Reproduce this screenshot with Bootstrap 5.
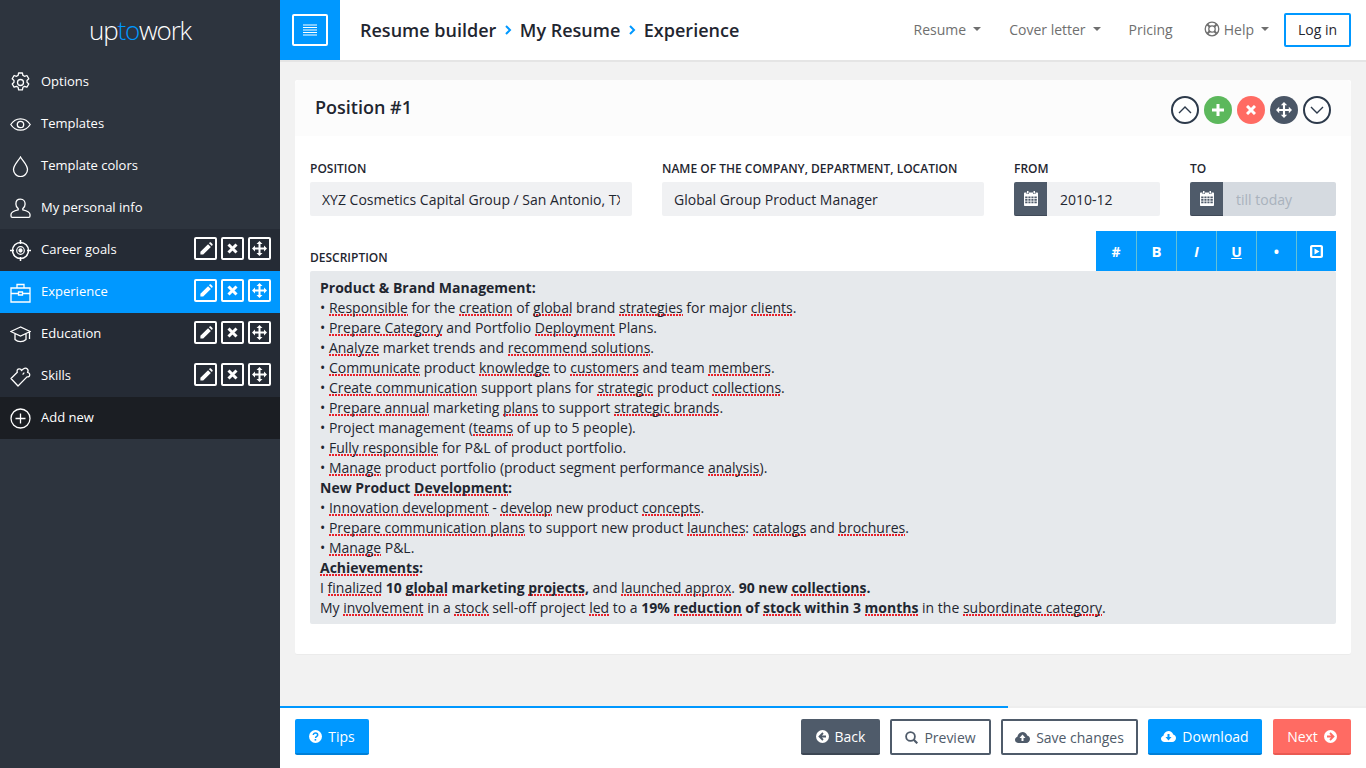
<!DOCTYPE html>
<html lang="en">
<head>
    <meta charset="UTF-8">
    <meta name="viewport" content="width=device-width, initial-scale=1.0">
    <title>Resume builder</title>
    <link href="https://cdn.jsdelivr.net/npm/bootstrap@5.3.0/dist/css/bootstrap.min.css" rel="stylesheet">
    <style>
        html, body { height: 100%; overflow: hidden; }
        body { font-family: "Open Sans", sans-serif; font-size: 14px; background: #f2f2f2; color: #1f2630; }
        svg { display: block; flex: none; }
        .app-side { width: 280px; flex: none; background: #2d343e; }
        .app-logo { height: 61px; font-size: 26px; font-weight: 300; letter-spacing: -1.200px; color: #fff; padding-top: 9px; line-height: 43px; }
        .app-logo span { color: #0098ff; }
        .side-row { height: 42px; padding: 0 9px 0 10px; color: #fff; font-size: 13px; font-weight: 500; gap: 10px; }
        .side-row.is-dark { background: #252b35; }
        .side-row.is-active { background: #0098ff; }
        .side-row.is-add { background: #1b1e23; }
        .side-tools { margin-top: -3px; }
        .side-act { width: 23px; height: 23px; border: 2px solid #fff; border-radius: 2px; background: transparent; padding: 0; color: #fff; }
        .app-top { height: 62px; background: #fff; border-bottom: 2px solid #e5e5e5; flex: none; padding-right: 15px; }
        .menu-tile { width: 60px; height: 60px; background: #0098ff; }
        .menu-box { width: 36px; height: 32px; border: 2px solid #fff; border-radius: 2px; background: transparent; padding: 0; }
        .crumbs { margin: 0 0 0 20px; font-size: 18px; font-weight: 600; height: 60px; }
        .crumbs li { color: #1f2630; }
        .crumbs svg { margin: 0 8px 0 8.500px; }
        .top-nav { height: 58px; }
        .top-link { color: #6f6f6f; padding: 0; }
        .top-link:hover { color: #6f6f6f; }
        .tri { width: 0; height: 0; border: 4px solid transparent; border-top-color: #6f6f6f; border-bottom: 0; margin-left: 7px; }
        .login-btn { height: 34px; width: 67px; padding: 0; border: 2px solid #0098ff; border-radius: 2px; color: #1f2630; font-size: 14px; line-height: 30px; margin: 2px 0 0 15px; }
        .app-scroll { padding: 18px 15px 0; min-height: 0; }
        .pos-card { height: 574px; border: 0; border-radius: 2px; background: #fff; box-shadow: 0 1px 1px rgba(0,0,0,.03); }
        .pos-head { height: 56px; background: #fcfcfc; border: 0; padding: 0 20px; }
        .pos-head h5 { font-size: 18px; font-weight: 600; margin: 0; }
        .circ-row { gap: 5px; margin-top: 3px; }
        .circ { width: 28px; height: 28px; border-radius: 50%; border: 0; padding: 0; }
        .circ-line { border: 2px solid #2d3a4b; background: #fff; }
        .circ-green { background: #5cb85c; }
        .circ-red { background: #ff6b63; }
        .circ-slate { background: #4a5666; }
        .pos-body { padding: 24px 15px 0; }
        .field-grid { display: grid; grid-template-columns: 322px 322px 146px 146px; gap: 30px; }
        .fld-label { font-size: 12px; font-weight: 600; text-transform: uppercase; color: #1f2630; line-height: 18px; margin-bottom: 4px; display: block; }
        .fld-input.form-control { height: 34px; background: #f0f1f3; border: 0; border-radius: 2px; font-size: 14px; padding: 0 12px; color: #1f2630; }
        .input-group .fld-input.form-control { padding-left: 13px; }
        .fld-addon { width: 34px; padding: 0; justify-content: center; background: #4f5b6a; border: 0; border-bottom: 1px solid #3f4957; border-radius: 2px 0 0 2px; }
        .input-group .fld-input.form-control[disabled] { background: #d5dae0; color: #a9b2bd; }
        .fld-input::placeholder { color: #a9b2bd; opacity: 1; }
        .desc-head { margin-top: 15px; height: 40px; }
        .desc-head .fld-label { margin: 0; padding: 8px 0 0; line-height: 18px; align-self: center; position: relative; top: 3px; }
        .fmt-group { display: flex; align-self: flex-start; }
        .fmt-btn { width: 40px; height: 40px; background: #0098ff; border: 0; border-left: 1px solid #62c0d8; border-radius: 0; color: #fff; font-weight: 700; font-size: 14px; padding: 0; }
        .fmt-btn:first-child { border-left: 0; }
        .fmt-btn:hover { background: #0098ff; color: #fff; }
        .desc-box { height: 353px; background: #e6e9ec; border-radius: 2px; padding: 7px 10px; line-height: 20px; color: #1f2630; }
        .desc-box b { font-weight: 700; }
        .sp { background: repeating-linear-gradient(90deg, #e8212b 0 2px, transparent 2px 3px) left bottom 1px / 100% 2px no-repeat; }
        .app-foot { height: 60px; background: #fff; flex: none; padding: 11px 15px 0; }
        .foot-line { height: 2px; background: #eee; flex: none; }
        .foot-line .progress-bar { background: #0098ff; }
        .act-btn { height: 36px; border-radius: 2px; font-size: 14px; padding: 0; gap: 6px; border: 0; justify-content: center; color: #fff; }
        .act-blue { background: #0098ff; border-bottom: 2px solid #0080d8; }
        .act-slate { background: #4f5b6a; border-bottom: 2px solid #3c4653; }
        .act-red { background: #ff6b63; border-bottom: 2px solid #ea5a52; }
        .act-line { border: 2px solid #4f5b6a; background: #fff; color: #4f5b6a; }
        .act-btn:hover { color: inherit; }
        .w-tips { width: 74px; }
        .w-back { width: 79px; }
        .w-prev { width: 101px; }
        .w-save { width: 137px; }
        .w-down { width: 114px; }
        .w-next { width: 78px; margin-left: 1px; }
    </style>
</head>
<body>
<div class="d-flex h-100">
    <aside class="app-side">
        <div class="app-logo text-center">up<span>to</span>work</div>
        <div class="side-row d-flex align-items-center">
            <svg width="21" height="21" viewBox="0 0 21 21" fill="none" stroke="#fff" stroke-width="1.300"><path d="M8.600 1h3.800l.5 2.400 1.600.9 2.400-.8 1.900 3.300-1.800 1.600v1.900l1.800 1.600-1.900 3.300-2.400-.8-1.600.9-.5 2.500H8.600l-.5-2.500-1.600-.9-2.400.8-1.900-3.300 1.800-1.600V8.400L2.200 6.800l1.900-3.300 2.400.8 1.600-.9z" stroke-linejoin="round"/><circle cx="10.500" cy="10.500" r="3"/></svg>
            <span>Options</span>
        </div>
        <div class="side-row d-flex align-items-center">
            <svg width="21" height="21" viewBox="0 0 21 21" fill="none" stroke="#fff" stroke-width="1.300"><path d="M.8 10.500C3.200 6.700 6.500 4.800 10.500 4.800s7.300 1.900 9.700 5.700c-2.400 3.800-5.700 5.700-9.700 5.700S3.200 14.300.8 10.500z"/><circle cx="10.500" cy="10.500" r="3.200"/></svg>
            <span>Templates</span>
        </div>
        <div class="side-row d-flex align-items-center">
            <svg width="21" height="21" viewBox="0 0 21 21" fill="none" stroke="#fff" stroke-width="1.300"><path d="M10.500 1c-2 3.600-7 8-7 12.600a7 7 0 0 0 14 0C17.500 9 12.500 4.600 10.500 1z"/></svg>
            <span>Template colors</span>
        </div>
        <div class="side-row d-flex align-items-center">
            <svg width="21" height="21" viewBox="0 0 21 21" fill="none" stroke="#fff" stroke-width="1.300"><path d="M10.500 1.200c-3 0-4.600 2.200-4.600 4.800 0 2 .9 3.700 2.300 4.600v1.200c-3 .6-7.200 1.700-7.200 4.800v1.500c0 .8.500 1.200 1.200 1.200h16.600c.7 0 1.200-.4 1.200-1.200v-1.500c0-3.100-4.200-4.200-7.200-4.800v-1.200c1.400-.9 2.300-2.600 2.300-4.600 0-2.600-1.600-4.800-4.600-4.800z"/></svg>
            <span>My personal info</span>
        </div>
        <div class="side-row is-dark d-flex align-items-center">
            <svg width="21" height="21" viewBox="0 0 21 21" fill="none" stroke="#fff" stroke-width="1.500"><circle cx="10.500" cy="10.500" r="8"/><circle cx="10.500" cy="10.500" r="3.800" stroke-width="1.200"/><circle cx="10.500" cy="10.500" r="1.400" fill="#fff"/><path d="M10.500 0v4M10.500 17v4M0 10.500h4M17 10.500h4"/></svg>
            <span class="flex-grow-1">Career goals</span>
            <div class="side-tools d-flex gap-1">
                <button class="side-act d-flex align-items-center justify-content-center"><svg width="14" height="14" viewBox="0 0 15 15" fill="#fff"><path d="M1.500 10.500L9.700 2.300l3 3-8.200 8.200H1.500zM10.700 1.300l.7-.7c.4-.4 1-.4 1.400 0l1.600 1.600c.4.400.4 1 0 1.400l-.7.7z"/></svg></button>
                <button class="side-act d-flex align-items-center justify-content-center"><svg width="11" height="11" viewBox="0 0 11 11" stroke="#fff" stroke-width="3"><path d="M1.500 1.500l8 8M9.500 1.500l-8 8"/></svg></button>
                <button class="side-act d-flex align-items-center justify-content-center"><svg width="15" height="15" viewBox="0 0 15 15" fill="#fff"><path d="M7.500 0l3 3H8.500v3.500H12v-2l3 3-3 3v-2H8.500V12h2l-3 3-3-3h2V8.500H3v2l-3-3 3-3v2h3.500V3h-2z"/></svg></button>
            </div>
        </div>
        <div class="side-row is-active d-flex align-items-center">
            <svg width="21" height="21" viewBox="0 0 21 21" fill="none" stroke="#fff" stroke-width="1.300"><path d="M1 6h19v14H1zM1 11.500h7.500M12.500 11.500H20M7 6V2.500h7V6M8.500 10h4v3h-4z"/></svg>
            <span class="flex-grow-1">Experience</span>
            <div class="side-tools d-flex gap-1">
                <button class="side-act d-flex align-items-center justify-content-center"><svg width="14" height="14" viewBox="0 0 15 15" fill="#fff"><path d="M1.500 10.500L9.700 2.300l3 3-8.200 8.200H1.500zM10.700 1.300l.7-.7c.4-.4 1-.4 1.400 0l1.600 1.600c.4.400.4 1 0 1.400l-.7.7z"/></svg></button>
                <button class="side-act d-flex align-items-center justify-content-center"><svg width="11" height="11" viewBox="0 0 11 11" stroke="#fff" stroke-width="3"><path d="M1.500 1.500l8 8M9.500 1.500l-8 8"/></svg></button>
                <button class="side-act d-flex align-items-center justify-content-center"><svg width="15" height="15" viewBox="0 0 15 15" fill="#fff"><path d="M7.500 0l3 3H8.500v3.500H12v-2l3 3-3 3v-2H8.500V12h2l-3 3-3-3h2V8.500H3v2l-3-3 3-3v2h3.500V3h-2z"/></svg></button>
            </div>
        </div>
        <div class="side-row is-dark d-flex align-items-center">
            <svg width="21" height="21" viewBox="0 0 21 21" fill="none" stroke="#fff" stroke-width="1.300"><path d="M10.500 3L.8 7.500l9.700 4.500 9.700-4.500zM5 10v5.500c1.500 1.500 3.500 2.200 5.500 2.200s4-.7 5.500-2.200V10M19.500 8v7"/></svg>
            <span class="flex-grow-1">Education</span>
            <div class="side-tools d-flex gap-1">
                <button class="side-act d-flex align-items-center justify-content-center"><svg width="14" height="14" viewBox="0 0 15 15" fill="#fff"><path d="M1.500 10.500L9.700 2.300l3 3-8.200 8.200H1.500zM10.700 1.300l.7-.7c.4-.4 1-.4 1.400 0l1.600 1.600c.4.400.4 1 0 1.400l-.7.7z"/></svg></button>
                <button class="side-act d-flex align-items-center justify-content-center"><svg width="11" height="11" viewBox="0 0 11 11" stroke="#fff" stroke-width="3"><path d="M1.500 1.500l8 8M9.500 1.500l-8 8"/></svg></button>
                <button class="side-act d-flex align-items-center justify-content-center"><svg width="15" height="15" viewBox="0 0 15 15" fill="#fff"><path d="M7.500 0l3 3H8.500v3.500H12v-2l3 3-3 3v-2H8.500V12h2l-3 3-3-3h2V8.500H3v2l-3-3 3-3v2h3.500V3h-2z"/></svg></button>
            </div>
        </div>
        <div class="side-row is-dark d-flex align-items-center">
            <svg width="21" height="21" viewBox="0 0 21 21" fill="none" stroke="#fff" stroke-width="1.300" stroke-linejoin="round"><path d="M1 12.500L7.300 6.200c-.7-1.700.2-3.400 2-3.400 1.200 0 2 .7 2.200 1.700L13.300 3c1.500-1 3-1 4 0s1 2.300.2 3.400c1.500.2 2.400 1.300 2.200 2.700-.2 1.400-1.400 2.100-2.700 1.800L8 20z"/><path d="M12.500 8c1 .2 1.500-.6 1.200-1.500"/></svg>
            <span class="flex-grow-1">Skills</span>
            <div class="side-tools d-flex gap-1">
                <button class="side-act d-flex align-items-center justify-content-center"><svg width="14" height="14" viewBox="0 0 15 15" fill="#fff"><path d="M1.500 10.500L9.700 2.300l3 3-8.200 8.200H1.500zM10.700 1.300l.7-.7c.4-.4 1-.4 1.400 0l1.600 1.600c.4.400.4 1 0 1.400l-.7.7z"/></svg></button>
                <button class="side-act d-flex align-items-center justify-content-center"><svg width="11" height="11" viewBox="0 0 11 11" stroke="#fff" stroke-width="3"><path d="M1.500 1.500l8 8M9.500 1.500l-8 8"/></svg></button>
                <button class="side-act d-flex align-items-center justify-content-center"><svg width="15" height="15" viewBox="0 0 15 15" fill="#fff"><path d="M7.500 0l3 3H8.500v3.500H12v-2l3 3-3 3v-2H8.500V12h2l-3 3-3-3h2V8.500H3v2l-3-3 3-3v2h3.500V3h-2z"/></svg></button>
            </div>
        </div>
        <div class="side-row is-add d-flex align-items-center">
            <svg width="21" height="21" viewBox="0 0 21 21" fill="none" stroke="#fff" stroke-width="1.300"><circle cx="10.500" cy="10.500" r="9.500"/><path d="M5.500 10.500h10M10.500 5.500v10"/></svg>
            <span>Add new</span>
        </div>
    </aside>

    <div class="d-flex flex-column flex-grow-1" style="min-width:0">
        <header class="app-top d-flex align-items-start">
            <div class="menu-tile d-flex align-items-center justify-content-center">
                <button class="menu-box d-flex align-items-center justify-content-center"><svg width="14" height="12" viewBox="0 0 14 12" stroke="#fff" stroke-width="1.200"><path d="M0 1h14M0 3.500h14M0 6h14M0 8.500h14M0 11h14"/></svg></button>
            </div>
            <ol class="crumbs list-unstyled d-flex align-items-center">
                <li>Resume builder</li>
                <li class="d-flex align-items-center"><svg width="7" height="10" viewBox="0 0 7 10" fill="none" stroke="#0098ff" stroke-width="2"><path d="M1 1l4 4-4 4"/></svg>My Resume</li>
                <li class="d-flex align-items-center"><svg width="7" height="10" viewBox="0 0 7 10" fill="none" stroke="#0098ff" stroke-width="2"><path d="M1 1l4 4-4 4"/></svg>Experience</li>
            </ol>
            <nav class="nav top-nav ms-auto align-items-center">
                <a class="nav-link top-link d-flex align-items-center" href="#" style="margin-right:28px">Resume<i class="tri"></i></a>
                <a class="nav-link top-link d-flex align-items-center" href="#" style="margin-right:28px">Cover letter<i class="tri"></i></a>
                <a class="nav-link top-link" href="#" style="margin-right:31px">Pricing</a>
                <a class="nav-link top-link d-flex align-items-center" href="#"><svg width="16" height="16" viewBox="0 0 16 16" fill="none" stroke="#6f6f6f" stroke-width="1.300" style="margin-right:4px"><circle cx="8" cy="8" r="6.800"/><circle cx="8" cy="8" r="3.200"/><path d="M3.200 3.200l2.500 2.500M12.800 3.200l-2.500 2.500M3.200 12.800l2.500-2.500M12.800 12.800l-2.500-2.500" stroke-width="2"/></svg>Help<i class="tri"></i></a>
                <a class="btn login-btn" href="#">Log in</a>
            </nav>
        </header>

        <main class="app-scroll flex-grow-1">
            <div class="card pos-card">
                <div class="card-header pos-head d-flex align-items-center justify-content-between">
                    <h5>Position #1</h5>
                    <div class="circ-row d-flex">
                        <button class="circ circ-line d-flex align-items-center justify-content-center"><svg width="14" height="8" viewBox="0 0 14 8" fill="none" stroke="#2d3a4b" stroke-width="1.400"><path d="M1 7l6-6 6 6"/></svg></button>
                        <button class="circ circ-green d-flex align-items-center justify-content-center"><svg width="12" height="12" viewBox="0 0 12 12" stroke="#fff" stroke-width="3"><path d="M6 0v12M0 6h12"/></svg></button>
                        <button class="circ circ-red d-flex align-items-center justify-content-center"><svg width="10" height="10" viewBox="0 0 10 10" stroke="#fff" stroke-width="3"><path d="M1 1l8 8M9 1l-8 8"/></svg></button>
                        <button class="circ circ-slate d-flex align-items-center justify-content-center"><svg width="16" height="16" viewBox="0 0 15 15" fill="#fff"><path d="M7.500 0l3 3H8.500v3.500H12v-2l3 3-3 3v-2H8.500V12h2l-3 3-3-3h2V8.500H3v2l-3-3 3-3v2h3.500V3h-2z"/></svg></button>
                        <button class="circ circ-line d-flex align-items-center justify-content-center"><svg width="14" height="8" viewBox="0 0 14 8" fill="none" stroke="#2d3a4b" stroke-width="1.400"><path d="M1 1l6 6 6-6"/></svg></button>
                    </div>
                </div>
                <div class="pos-body">
                    <div class="field-grid">
                        <div>
                            <label class="fld-label">Position</label>
                            <input class="form-control fld-input" type="text" value="XYZ Cosmetics Capital Group / San Antonio, TX">
                        </div>
                        <div>
                            <label class="fld-label">Name of the company, department, location</label>
                            <input class="form-control fld-input" type="text" value="Global Group Product Manager">
                        </div>
                        <div>
                            <label class="fld-label">From</label>
                            <div class="input-group">
                                <span class="input-group-text fld-addon"><svg width="14" height="15" viewBox="0 0 14 15" fill="#fff"><path d="M3 0h1.500v2.500H3zM9.500 0H11v2.500H9.500z"/><path fill-rule="evenodd" d="M1 1.500h1.500v1.500h2.500V1.500h4V3h2.500V1.500H13c.6 0 1 .4 1 1V14c0 .6-.4 1-1 1H1c-.6 0-1-.4-1-1V2.500c0-.6.4-1 1-1zM1.200 5.500v1.700h2.300V5.500zm3.200 0v1.700h2.100V5.500zm3 0v1.700h2.100V5.500zm3 0v1.700h2.400V5.500zM1.200 8v1.700h2.300V8zm3.200 0v1.700h2.100V8zm3 0v1.700h2.100V8zm3 0v1.700h2.400V8zm-9.200 2.500v1.700h2.300v-1.700zm3.200 0v1.700h2.100v-1.700zm3 0v1.700h2.100v-1.700zm3 0v1.700h2.400v-1.700z"/></svg></span>
                                <input class="form-control fld-input" type="text" value="2010-12">
                            </div>
                        </div>
                        <div>
                            <label class="fld-label">To</label>
                            <div class="input-group">
                                <span class="input-group-text fld-addon"><svg width="14" height="15" viewBox="0 0 14 15" fill="#fff"><path d="M3 0h1.500v2.500H3zM9.500 0H11v2.500H9.500z"/><path fill-rule="evenodd" d="M1 1.500h1.500v1.500h2.500V1.500h4V3h2.500V1.500H13c.6 0 1 .4 1 1V14c0 .6-.4 1-1 1H1c-.6 0-1-.4-1-1V2.500c0-.6.4-1 1-1zM1.200 5.500v1.700h2.300V5.500zm3.200 0v1.700h2.100V5.500zm3 0v1.700h2.100V5.500zm3 0v1.700h2.400V5.500zM1.200 8v1.700h2.300V8zm3.200 0v1.700h2.100V8zm3 0v1.700h2.100V8zm3 0v1.700h2.400V8zm-9.200 2.500v1.700h2.300v-1.700zm3.200 0v1.700h2.100v-1.700zm3 0v1.700h2.100v-1.700zm3 0v1.700h2.400v-1.700z"/></svg></span>
                                <input class="form-control fld-input" type="text" placeholder="till today" disabled>
                            </div>
                        </div>
                    </div>
                    <div class="desc-head d-flex align-items-center justify-content-between">
                        <label class="fld-label">Description</label>
                        <div class="fmt-group">
                            <button class="btn fmt-btn">#</button>
                            <button class="btn fmt-btn" style="font-size:15px">B</button>
                            <button class="btn fmt-btn fst-italic">I</button>
                            <button class="btn fmt-btn text-decoration-underline">U</button>
                            <button class="btn fmt-btn">•</button>
                            <button class="btn fmt-btn d-flex align-items-center justify-content-center"><svg width="13" height="13" viewBox="0 0 13 13"><path fill="#fff" fill-rule="evenodd" d="M2 0h9c1.100 0 2 .9 2 2v9c0 1.100-.9 2-2 2H2c-1.100 0-2-.9-2-2V2C0 .9.900 0 2 0zm.3 2v9h8.400V2zM4.500 3.500l5 3-5 3z"/></svg></button>
                        </div>
                    </div>
                    <div class="desc-box">
                        <b>Product &amp; Brand Management:</b><br>
                        • <span class="sp">Responsible</span> for the <span class="sp">creation</span> of <span class="sp">global</span> brand <span class="sp">strategies</span> for major <span class="sp">clients</span>.<br>
                        • <span class="sp">Prepare Category</span> and Portfolio <span class="sp">Deployment</span> Plans.<br>
                        • <span class="sp">Analyze</span> market trends and <span class="sp">recommend solutions</span>.<br>
                        • <span class="sp">Communicate</span> product <span class="sp">knowledge</span> to <span class="sp">customers</span> and team <span class="sp">members</span>.<br>
                        • <span class="sp">Create communication</span> support plans for <span class="sp">strategic</span> product <span class="sp">collections</span>.<br>
                        • <span class="sp">Prepare annual</span> marketing <span class="sp">plans</span> to support <span class="sp">strategic brands</span>.<br>
                        • Project management (<span class="sp">teams</span> of up to 5 people).<br>
                        • <span class="sp">Fully responsible</span> for P&amp;L of product portfolio.<br>
                        • <span class="sp">Manage</span> product portfolio (product segment performance <span class="sp">analysis</span>).<br>
                        <b>New Product <span class="sp">Development</span>:</b><br>
                        • <span class="sp">Innovation development</span> - <span class="sp">develop</span> new product <span class="sp">concepts</span>.<br>
                        • <span class="sp">Prepare communication plans</span> to support new product <span class="sp">launches</span>: <span class="sp">catalogs</span> and <span class="sp">brochures</span>.<br>
                        • <span class="sp">Manage</span> P&amp;L.<br>
                        <b><span class="sp">Achievements</span>:</b><br>
                        I <span class="sp">finalized</span> <b>10 <span class="sp">global</span> marketing <span class="sp">projects</span>,</b> and <span class="sp">launched approx</span>. <b>90 new <span class="sp">collections</span>.</b><br>
                        My <span class="sp">involvement</span> in a <span class="sp">stock</span> sell-off project <span class="sp">led</span> to a <b>19% <span class="sp">reduction</span> of <span class="sp">stock</span> within 3 <span class="sp">months</span></b> in the <span class="sp">subordinate category</span>.
                    </div>
                </div>
            </div>
        </main>

        <div class="progress foot-line rounded-0" role="progressbar"><div class="progress-bar" style="width:67%"></div></div>
        <footer class="app-foot d-flex align-items-start justify-content-between">
            <a class="btn act-btn act-blue w-tips d-flex align-items-center" href="#"><svg width="13" height="13" viewBox="0 0 13 13"><circle cx="6.500" cy="6.500" r="6.500" fill="#fff"/><path d="M4.300 5c0-1.300 1-2 2.200-2s2.200.7 2.200 1.900c0 1.600-2.100 1.500-2.100 3" fill="none" stroke="#0098ff" stroke-width="1.500"/><rect x="5.600" y="9" width="1.600" height="1.600" fill="#0098ff"/></svg>Tips</a>
            <div class="d-flex" style="gap:10px">
                <a class="btn act-btn act-slate w-back d-flex align-items-center" href="#"><svg width="13" height="13" viewBox="0 0 13 13"><circle cx="6.500" cy="6.500" r="6.500" fill="#fff"/><path d="M7 3L3.500 6.500 7 10M4 6.500h6" fill="none" stroke="#4f5b6a" stroke-width="1.800"/></svg>Back</a>
                <a class="btn act-btn act-line w-prev d-flex align-items-center" href="#"><svg width="13" height="13" viewBox="0 0 13 13" fill="none" stroke="#4f5b6a" stroke-width="1.800"><circle cx="5.500" cy="5.500" r="4.400"/><path d="M8.700 8.700l3.600 3.600" stroke-width="2.200"/></svg>Preview</a>
                <a class="btn act-btn act-line w-save d-flex align-items-center" href="#"><svg width="15" height="12" viewBox="0 0 15 12"><path fill="#4f5b6a" d="M3.500 12C1.500 12 0 10.600 0 8.800c0-1.500 1-2.700 2.400-3.100C2.800 3.200 4.800 1 7.500 1c2.200 0 4 1.400 4.700 3.400C13.800 4.700 15 6.100 15 8c0 2.200-1.700 4-3.800 4z"/><path fill="#fff" d="M7.500 3.500L10.500 7H8.500v3h-2V7h-2z"/></svg>Save changes</a>
                <a class="btn act-btn act-blue w-down d-flex align-items-center" href="#"><svg width="15" height="12" viewBox="0 0 15 12"><path fill="#fff" d="M3.500 12C1.500 12 0 10.600 0 8.800c0-1.500 1-2.700 2.400-3.100C2.800 3.200 4.800 1 7.500 1c2.200 0 4 1.400 4.700 3.400C13.800 4.700 15 6.100 15 8c0 2.200-1.700 4-3.800 4z"/><path fill="#0098ff" d="M7.500 10.500L4.500 7h2V4h2v3h2z"/></svg>Download</a>
                <a class="btn act-btn act-red w-next d-flex align-items-center" href="#">Next<svg width="13" height="13" viewBox="0 0 13 13"><circle cx="6.500" cy="6.500" r="6.500" fill="#fff"/><path d="M6 3l3.500 3.500L6 10M9 6.500H3" fill="none" stroke="#ff6b63" stroke-width="1.800"/></svg></a>
            </div>
        </footer>
    </div>
</div>
<script src="https://cdn.jsdelivr.net/npm/bootstrap@5.3.0/dist/js/bootstrap.bundle.min.js"></script>
</body>
</html>
